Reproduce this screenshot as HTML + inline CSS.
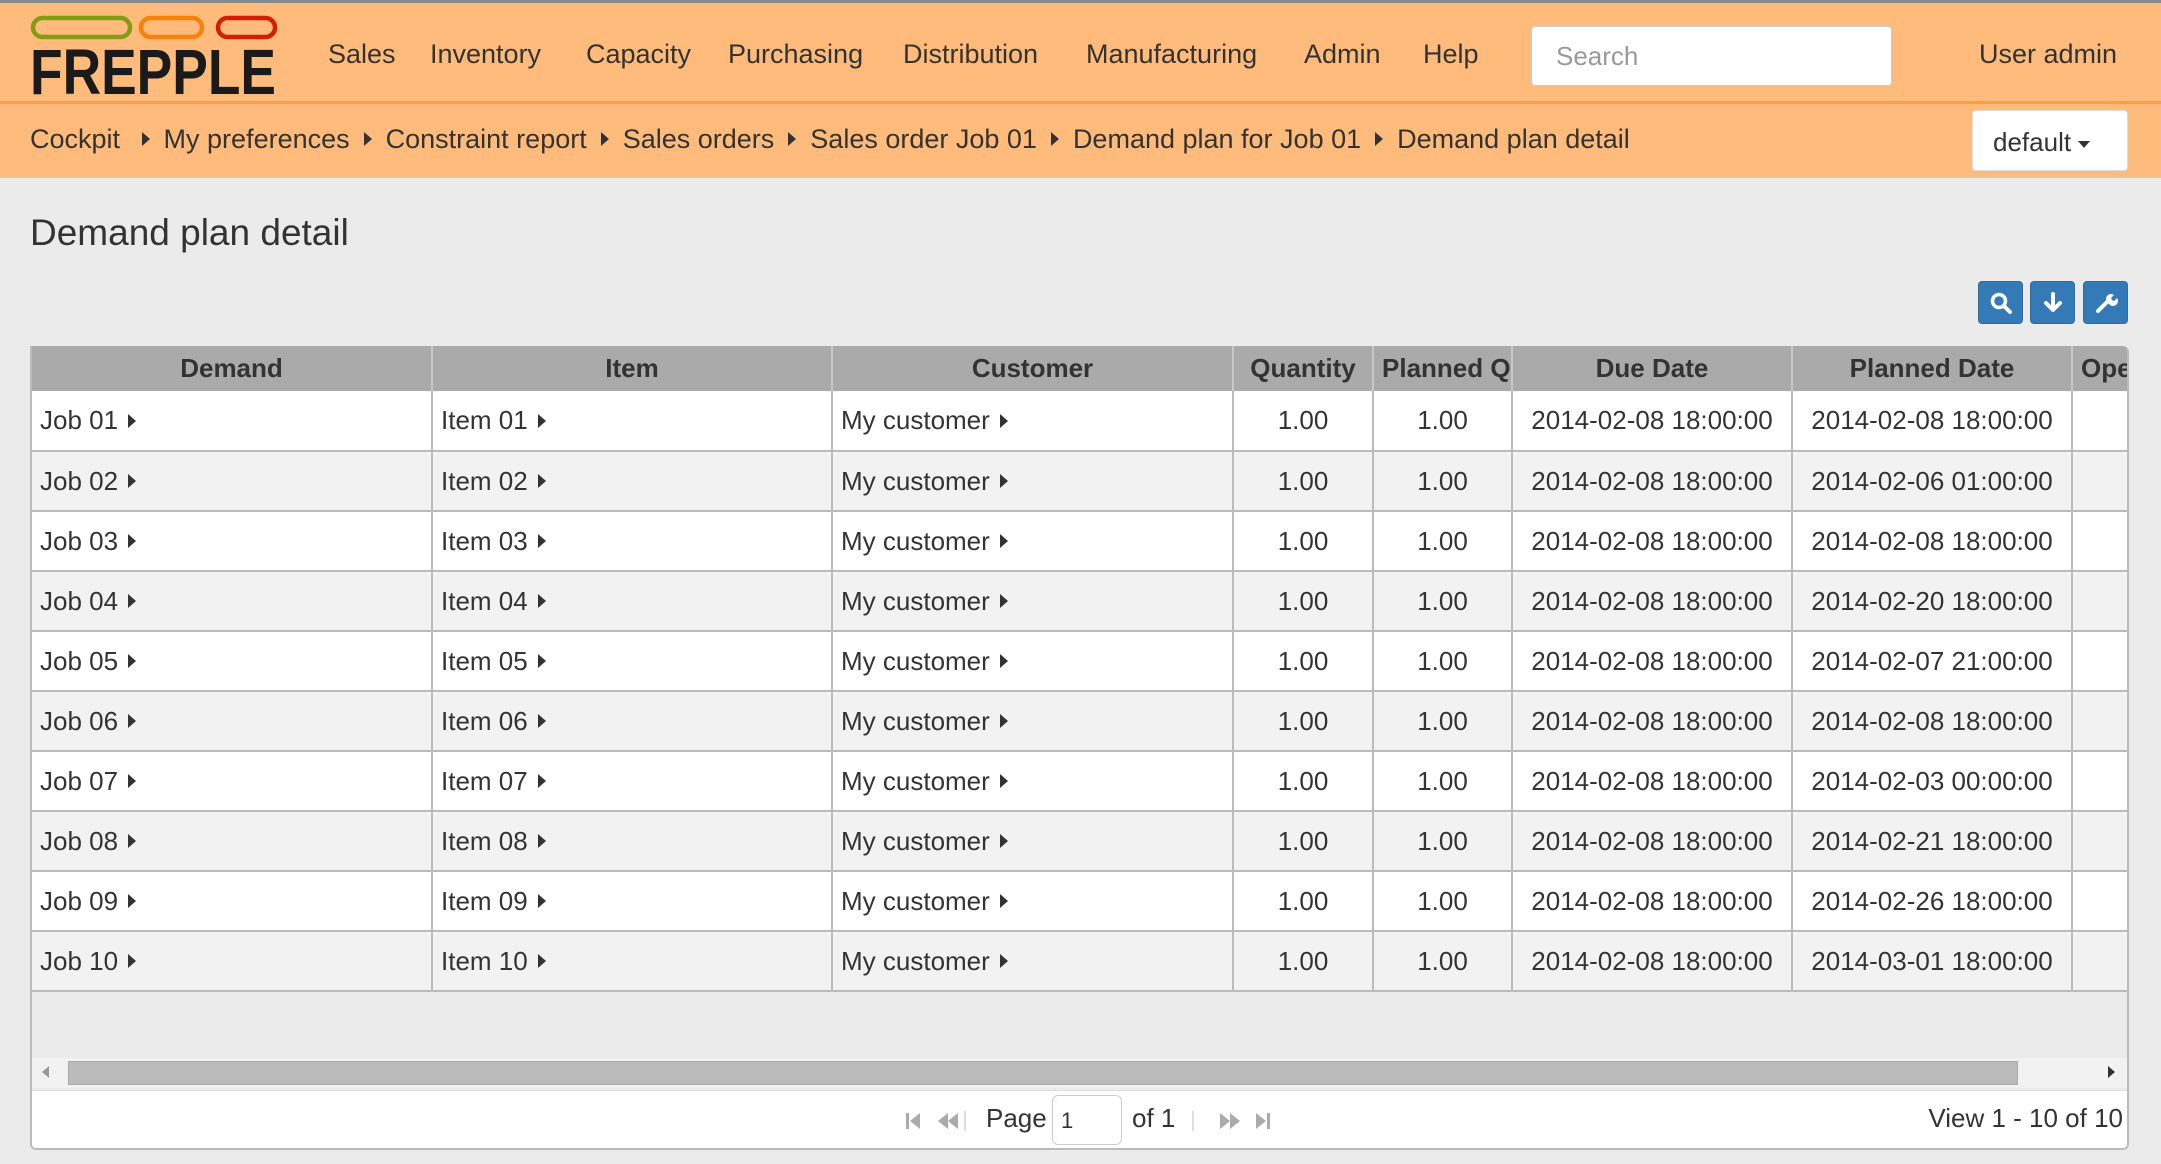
<!DOCTYPE html>
<html><head><meta charset="utf-8"><style>
*{box-sizing:border-box;margin:0;padding:0}
body{width:2161px;height:1164px;background:#ebebeb;font-family:"Liberation Sans",sans-serif;color:#333;position:relative;overflow:hidden}
.nav{position:absolute;left:0;top:0;width:2161px;height:104px;background:#ffbb7b;border-top:3px solid #888;border-bottom:3px solid #f7a040}
.nav span{position:absolute;top:36px;font-size:27px;color:#333}
.bc{position:absolute;left:0;top:104px;width:2161px;height:74px;background:#ffbb7b;border-bottom:2px solid #f5c090}
.bc .t{position:absolute;left:30px;top:20px;font-size:27px;color:#333;white-space:nowrap}
.tri{display:inline-block;width:0;height:0;border-left:8px solid #333;border-top:7px solid transparent;border-bottom:7px solid transparent;margin:0 14px 3px 14px;vertical-align:middle}
td .tri{margin-left:10px}
.search{position:absolute;left:1531px;top:23px;width:361px;height:60px;background:#fff;border:1px solid #ccc;border-radius:4px;font-size:26px;color:#999;padding:14px 24px}
.def{position:absolute;left:1972px;top:6px;width:156px;height:61px;background:#fff;border:1px solid #ddd;border-radius:4px;font-size:26px;padding:16px 20px;color:#333;white-space:nowrap}
h1{position:absolute;left:30px;top:212px;font-size:37px;font-weight:normal;color:#333}
.btn{position:absolute;top:281px;width:45px;height:43px;background:#337ab7;border:1px solid #2e6da4;border-radius:4px}
.btn svg{position:absolute;left:10px;top:9px}
.grid{position:absolute;left:30px;top:346px;width:2099px;height:804px;background:#ebebeb;border:2px solid #bbb;border-top:0;border-radius:0 6px 6px 6px;overflow:hidden}
table{border-collapse:collapse;table-layout:fixed;width:2160px;font-size:26px}
th{background:#aaa;height:45px;font-weight:bold;color:#333;border-right:2px solid #c8c8c8;white-space:nowrap;overflow:hidden;text-align:center}
td{height:60px;border-right:2px solid #bbb;border-bottom:2px solid #bbb;white-space:nowrap;overflow:hidden;padding:0 8px}
tr:nth-child(even) td{background:#fff}
tr:nth-child(odd) td{background:#f2f2f2}
td.n{text-align:center}
.sb{position:absolute;left:0;top:712px;width:2097px;height:30px;background:#f2f2f2}
.sb .th{position:absolute;left:36px;top:3px;width:1950px;height:24px;background:#bbb;border:1px solid #aaa}
.pg{position:absolute;left:0;top:744px;width:2097px;height:60px;background:#fff;border-top:1px solid #ddd;font-size:26px}
.pi{position:absolute;top:20px;height:20px}
</style></head><body>
<div class="nav">
<svg style="position:absolute;left:30px;top:11px" width="250" height="82" viewBox="0 0 250 82">
<rect x="3" y="4" width="97" height="19" rx="9.5" fill="none" stroke="#849b14" stroke-width="4.5"/>
<rect x="111" y="4" width="61" height="19" rx="9.5" fill="none" stroke="#f5820c" stroke-width="4.5"/>
<rect x="188" y="4" width="57" height="19" rx="9.5" fill="none" stroke="#d21e05" stroke-width="4.5"/>
<text x="0" y="80" font-family="Liberation Sans" font-size="64" font-weight="bold" fill="#1a1a1a" textLength="246" lengthAdjust="spacingAndGlyphs">FREPPLE</text>
</svg>
<span style="left:328px">Sales</span><span style="left:430px">Inventory</span><span style="left:586px">Capacity</span><span style="left:728px">Purchasing</span><span style="left:903px">Distribution</span><span style="left:1086px">Manufacturing</span><span style="left:1304px">Admin</span><span style="left:1423px">Help</span>
<div class="search">Search</div>
<span style="left:1979px">User admin</span>
</div>
<div class="bc"><div class="t">Cockpit <span class="tri"></span>My preferences<span class="tri"></span>Constraint report<span class="tri"></span>Sales orders<span class="tri"></span>Sales order Job 01<span class="tri"></span>Demand plan for Job 01<span class="tri"></span>Demand plan detail</div>
<div class="def">default <span style="display:inline-block;border-top:7px solid #333;border-left:6px solid transparent;border-right:6px solid transparent;vertical-align:middle"></span></div></div>
<h1>Demand plan detail</h1>
<div class="btn" style="left:1978px"><svg width="24" height="24" viewBox="0 0 24 24"><circle cx="10" cy="10" r="6.5" fill="none" stroke="#fff" stroke-width="3.5"/><path d="M15 15l6 6" stroke="#fff" stroke-width="4" stroke-linecap="round"/></svg></div>
<div class="btn" style="left:2030px"><svg width="24" height="24" viewBox="0 0 24 24"><path d="M12 3v15M5 12l7 7 7-7" fill="none" stroke="#fff" stroke-width="4" stroke-linecap="round" stroke-linejoin="round"/></svg></div>
<div class="btn" style="left:2083px"><svg width="24" height="24" viewBox="0 0 24 24"><path d="M4 20l10-10" stroke="#fff" stroke-width="4" stroke-linecap="round"/><path d="M13 11a5 5 0 0 1 7-7l-3 3 1 2 2 1 3-3a5 5 0 0 1-7 7z" fill="#fff"/></svg></div>
<div class="grid">
<table>
<colgroup><col style="width:400px"><col style="width:400px"><col style="width:401px"><col style="width:140px"><col style="width:139px"><col style="width:280px"><col style="width:280px"><col style="width:120px"></colgroup>
<tr><th>Demand</th><th>Item</th><th>Customer</th><th>Quantity</th><th style="text-align:left;padding-left:8px">Planned Quantity</th><th>Due Date</th><th>Planned Date</th><th style="text-align:left;padding-left:8px">Operation</th></tr>
<tr><td>Job 01<span class="tri"></span></td><td>Item 01<span class="tri"></span></td><td>My customer<span class="tri"></span></td><td class="n">1.00</td><td class="n">1.00</td><td class="n">2014-02-08 18:00:00</td><td class="n">2014-02-08 18:00:00</td><td></td></tr>
<tr><td>Job 02<span class="tri"></span></td><td>Item 02<span class="tri"></span></td><td>My customer<span class="tri"></span></td><td class="n">1.00</td><td class="n">1.00</td><td class="n">2014-02-08 18:00:00</td><td class="n">2014-02-06 01:00:00</td><td></td></tr>
<tr><td>Job 03<span class="tri"></span></td><td>Item 03<span class="tri"></span></td><td>My customer<span class="tri"></span></td><td class="n">1.00</td><td class="n">1.00</td><td class="n">2014-02-08 18:00:00</td><td class="n">2014-02-08 18:00:00</td><td></td></tr>
<tr><td>Job 04<span class="tri"></span></td><td>Item 04<span class="tri"></span></td><td>My customer<span class="tri"></span></td><td class="n">1.00</td><td class="n">1.00</td><td class="n">2014-02-08 18:00:00</td><td class="n">2014-02-20 18:00:00</td><td></td></tr>
<tr><td>Job 05<span class="tri"></span></td><td>Item 05<span class="tri"></span></td><td>My customer<span class="tri"></span></td><td class="n">1.00</td><td class="n">1.00</td><td class="n">2014-02-08 18:00:00</td><td class="n">2014-02-07 21:00:00</td><td></td></tr>
<tr><td>Job 06<span class="tri"></span></td><td>Item 06<span class="tri"></span></td><td>My customer<span class="tri"></span></td><td class="n">1.00</td><td class="n">1.00</td><td class="n">2014-02-08 18:00:00</td><td class="n">2014-02-08 18:00:00</td><td></td></tr>
<tr><td>Job 07<span class="tri"></span></td><td>Item 07<span class="tri"></span></td><td>My customer<span class="tri"></span></td><td class="n">1.00</td><td class="n">1.00</td><td class="n">2014-02-08 18:00:00</td><td class="n">2014-02-03 00:00:00</td><td></td></tr>
<tr><td>Job 08<span class="tri"></span></td><td>Item 08<span class="tri"></span></td><td>My customer<span class="tri"></span></td><td class="n">1.00</td><td class="n">1.00</td><td class="n">2014-02-08 18:00:00</td><td class="n">2014-02-21 18:00:00</td><td></td></tr>
<tr><td>Job 09<span class="tri"></span></td><td>Item 09<span class="tri"></span></td><td>My customer<span class="tri"></span></td><td class="n">1.00</td><td class="n">1.00</td><td class="n">2014-02-08 18:00:00</td><td class="n">2014-02-26 18:00:00</td><td></td></tr>
<tr><td>Job 10<span class="tri"></span></td><td>Item 10<span class="tri"></span></td><td>My customer<span class="tri"></span></td><td class="n">1.00</td><td class="n">1.00</td><td class="n">2014-02-08 18:00:00</td><td class="n">2014-03-01 18:00:00</td><td></td></tr>
</table>
<div class="sb"><span style="position:absolute;left:10px;top:8px;border-right:7px solid #999;border-top:6px solid transparent;border-bottom:6px solid transparent"></span><div class="th"></div><span style="position:absolute;left:2076px;top:8px;border-left:7px solid #333;border-top:6px solid transparent;border-bottom:6px solid transparent"></span></div>
<div class="pg">
<svg class="pi" style="left:872px" width="80" height="20" viewBox="0 0 80 20"><rect x="2" y="2" width="3" height="16" fill="#aaa"/><path d="M16 2v16L6 10z" fill="#aaa"/><path d="M44 2v16L34 10zM54 2v16L44 10z" fill="#aaa"/><rect x="60" y="0" width="2" height="20" fill="#ddd"/></svg>
<span style="position:absolute;left:954px;top:12px">Page</span>
<div style="position:absolute;left:1020px;top:4px;width:70px;height:50px;border:1px solid #ccc;border-radius:6px;padding:12px 8px;font-size:22px">1</div>
<span style="position:absolute;left:1100px;top:12px">of 1</span>
<svg class="pi" style="left:1160px" width="80" height="20" viewBox="0 0 80 20"><rect x="0" y="0" width="2" height="20" fill="#ddd"/><path d="M38 2v16l10-8zM28 2v16l10-8z" fill="#aaa"/><path d="M64 2v16l10-8z" fill="#aaa"/><rect x="75" y="2" width="3" height="16" fill="#aaa"/></svg>
<span style="position:absolute;right:6px;top:12px">View 1 - 10 of 10</span>
</div>
</div>
</body></html>
